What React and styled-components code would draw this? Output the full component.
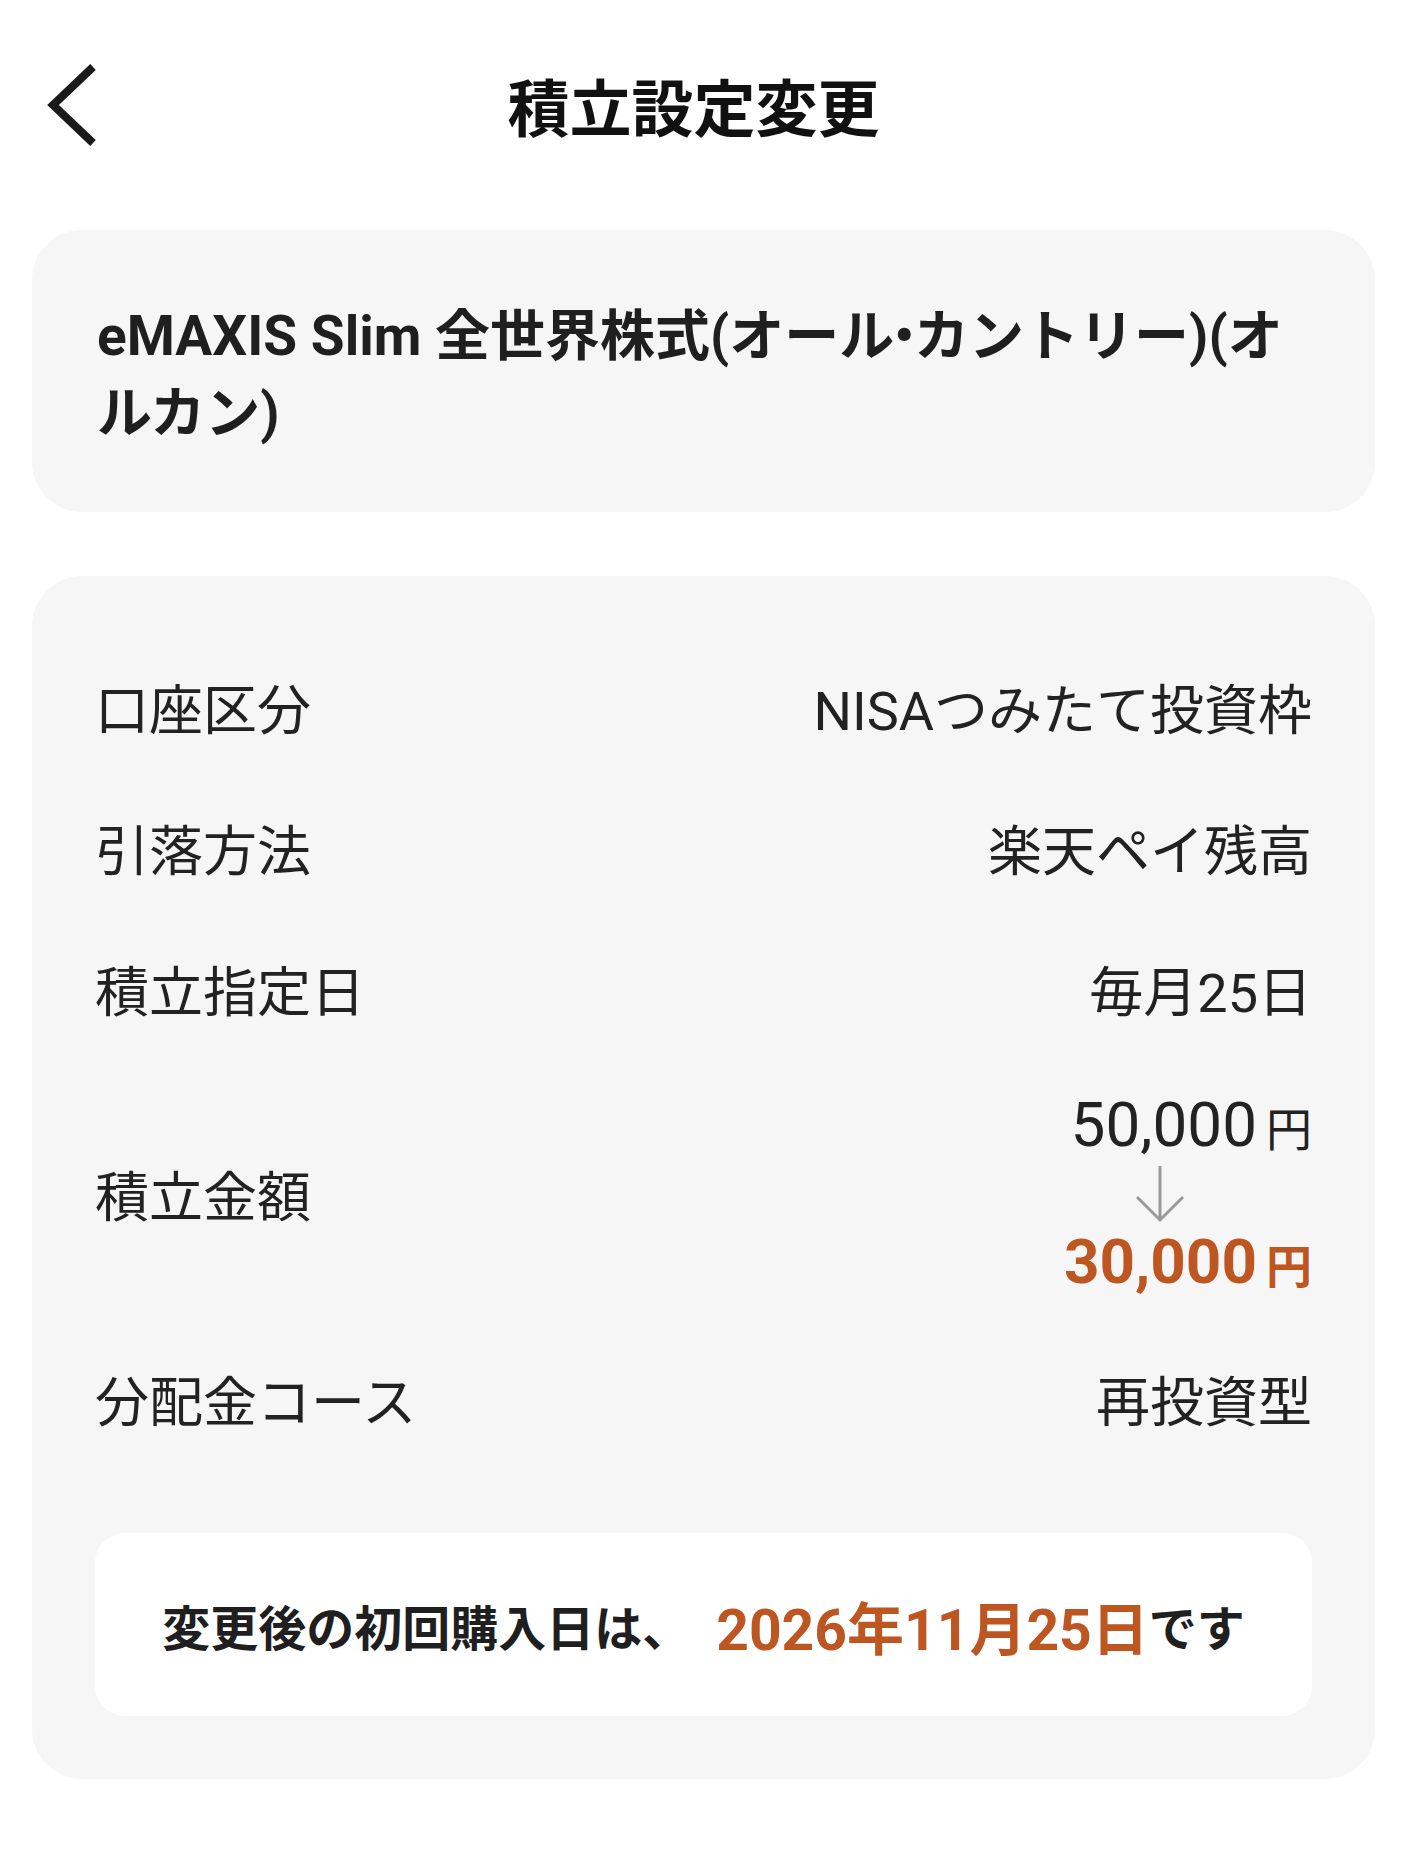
import React from 'react';
import styled, { createGlobalStyle } from 'styled-components';

const GlobalStyle = createGlobalStyle`
  * {
    box-sizing: border-box;
  }
  body {
    margin: 0;
    background: #ffffff;
    font-family: Roboto, "Noto Sans CJK JP", sans-serif;
    color: #222222;
  }
`;

const Page = styled.div`
  width: 1414px;
  padding: 0 39px 0 32px;
`;

const Header = styled.header`
  height: 218px;
  display: grid;
  grid-template-columns: 1fr auto 1fr;
  align-items: center;
`;

const BackButton = styled.button`
  all: unset;
  cursor: pointer;
  justify-self: start;
  margin-left: 15px;
  margin-top: -8px;
  display: flex;
`;

const Title = styled.h1`
  margin: -8px 20px 0 0;
  font-size: 62px;
  font-weight: 700;
  color: #111111;
`;

const Card = styled.section`
  background: #f6f6f6;
  border-radius: 50px;
  padding: ${(p) => p.$pad};
  margin-top: ${(p) => p.$top || 0}px;
`;

const FundName = styled.h2`
  margin: 0;
  font-size: 55px;
  line-height: 77px;
  font-weight: 700;
  color: #1f1f1f;
`;

const Rows = styled.div`
  display: flex;
  flex-direction: column;
  gap: 66px;
`;

const Row = styled.div`
  display: flex;
  justify-content: space-between;
  align-items: center;
  font-size: 54px;
  line-height: 75px;
`;

const Label = styled.span`
  color: #222222;
`;

const Value = styled.span`
  color: #222222;
  text-align: right;
`;

const Amounts = styled.div`
  display: grid;
  grid-template-columns: auto auto;
  column-gap: 9px;
  align-items: baseline;
  justify-content: end;
  padding-bottom: 5px;
`;

const Amount = styled.span`
  justify-self: end;
  font-size: 62px;
  line-height: 56px;
  font-weight: ${(p) => (p.$next ? 700 : 400)};
  color: ${(p) => (p.$next ? '#bd5620' : '#222222')};
`;

const Unit = styled.span`
  font-size: 46px;
  line-height: 56px;
  font-weight: ${(p) => (p.$next ? 700 : 400)};
  color: ${(p) => (p.$next ? '#bd5620' : '#222222')};
`;

const ArrowCell = styled.div`
  grid-column: 1;
  justify-self: center;
  align-self: center;
  display: flex;
  margin: 7px 0 11px;
`;

const Notice = styled.div`
  margin-top: 92px;
  background: #ffffff;
  border-radius: 30px;
  height: 183px;
  display: flex;
  align-items: center;
  justify-content: center;
  font-size: 48px;
  font-weight: 700;
  color: #1f1f1f;
  white-space: nowrap;
`;

const DateText = styled.span`
  margin-left: 26px;
  font-size: 57px;
  color: #bd5620;
`;

const rows = [
  ['口座区分', 'NISAつみたて投資枠'],
  ['引落方法', '楽天ペイ残高'],
  ['積立指定日', '毎月25日'],
];

function ChevronLeft() {
  return (
    <svg width="52" height="88" viewBox="0 0 52 88" fill="none">
      <path d="M46 6 L6 44 L46 82" stroke="#1a1a1a" strokeWidth="8" />
    </svg>
  );
}

function ArrowDown() {
  return (
    <svg width="50" height="58" viewBox="0 0 50 58" fill="none">
      <path d="M25 1 V55 M2 32 L25 55 L48 32" stroke="#9a9a9a" strokeWidth="3" />
    </svg>
  );
}

export default function App() {
  return (
    <>
      <GlobalStyle />
      <Page>
        <Header>
          <BackButton aria-label="戻る">
            <ChevronLeft />
          </BackButton>
          <Title>積立設定変更</Title>
          <span />
        </Header>

        <Card $pad="68px 63px 60px 65px" $top={12}>
          <FundName>eMAXIS Slim 全世界株式(オール•カントリー)(オルカン)</FundName>
        </Card>

        <Card $pad="98px 63px 63px 63px" $top={64}>
          <Rows>
            {rows.map(([label, value]) => (
              <Row key={label}>
                <Label>{label}</Label>
                <Value>{value}</Value>
              </Row>
            ))}
            <Row>
              <Label>積立金額</Label>
              <Amounts>
                <Amount>50,000</Amount>
                <Unit>円</Unit>
                <ArrowCell>
                  <ArrowDown />
                </ArrowCell>
                <span />
                <Amount $next>30,000</Amount>
                <Unit $next>円</Unit>
              </Amounts>
            </Row>
            <Row>
              <Label>分配金コース</Label>
              <Value>再投資型</Value>
            </Row>
          </Rows>
          <Notice>
            変更後の初回購入日は、<DateText>2026年11月25日</DateText>です
          </Notice>
        </Card>
      </Page>
    </>
  );
}
